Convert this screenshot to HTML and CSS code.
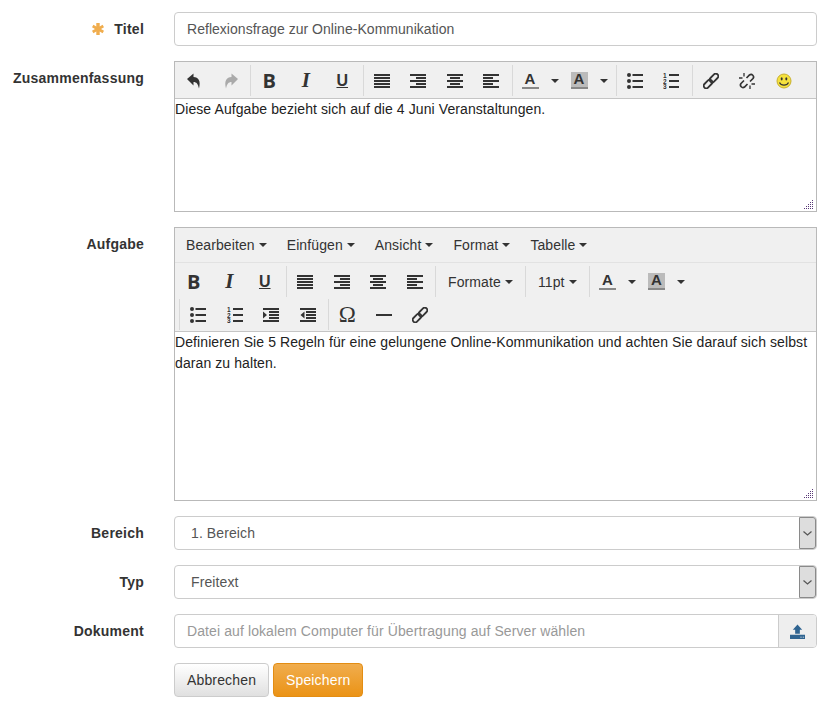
FILE: index.html
```html
<!DOCTYPE html>
<html lang="de">
<head>
    <meta charset="UTF-8">
    <title>Aufgabe bearbeiten</title>
    <link rel="stylesheet" href="styles.css">
</head>
<body>
    <svg class="defs" width="0" height="0">
        <symbol id="i-undo" viewBox="0 0 16 16"><path d="M1 6 7.5.5V4c5 0 7.500 4 5.500 11.500C12 11 10.500 9 7.500 9v3.500z"/></symbol>
        <symbol id="i-justify" viewBox="0 0 16 16"><path d="M0 1h16v2H0zM0 4h16v2H0zM0 7h16v2H0zM0 10h16v2H0zM0 13h16v2H0z"/></symbol>
        <symbol id="i-right" viewBox="0 0 16 16"><path d="M0 1h16v2H0zM6 4h10v2H6zM0 7h16v2H0zM6 10h10v2H6zM0 13h16v2H0z"/></symbol>
        <symbol id="i-center" viewBox="0 0 16 16"><path d="M0 1h16v2H0zM3 4h10v2H3zM0 7h16v2H0zM3 10h10v2H3zM0 13h16v2H0z"/></symbol>
        <symbol id="i-left" viewBox="0 0 16 16"><path d="M0 1h16v2H0zM0 4h10v2H0zM0 7h16v2H0zM0 10h10v2H0zM0 13h16v2H0z"/></symbol>
        <symbol id="i-bullist" viewBox="0 0 16 16"><circle cx="2" cy="2" r="2"/><circle cx="2" cy="8" r="2"/><circle cx="2" cy="14" r="2"/><path d="M5.500 1h10.500v2H5.500zM5.500 7h10.500v2H5.500zM5.500 13h10.500v2H5.500z"/></symbol>
        <symbol id="i-indent" viewBox="0 0 16 16"><path d="M0 1h16v2H0zM6 4h10v2H6zM6 7h10v2H6zM6 10h10v2H6zM0 13h16v2H0zM0 4.500 4 8l-4 3.500z"/></symbol>
        <symbol id="i-outdent" viewBox="0 0 16 16"><path d="M0 1h16v2H0zM6 4h10v2H6zM6 7h10v2H6zM6 10h10v2H6zM0 13h16v2H0zM4.500 4.500.5 8l4 3.500z"/></symbol>
        <symbol id="i-link" viewBox="0 0 16 16"><g fill="none" stroke="currentColor" stroke-width="1.800"><rect x="-5" y="-2.500" width="10" height="5" rx="2.500" transform="translate(5 11) rotate(-45)"/><rect x="-5" y="-2.500" width="10" height="5" rx="2.500" transform="translate(11 5) rotate(-45)"/></g></symbol>
        <symbol id="i-unlink" viewBox="0 0 16 16"><g fill="none" stroke="currentColor" stroke-width="1.700"><path d="M5 7.500 2 10.500a2.500 2.500 0 0 0 3.500 3.500L8.500 11"/><path d="M11 8.500l3-3A2.500 2.500 0 0 0 10.500 2L7.500 5"/><path d="M0 5h3.500M5 0v3.500M16 11h-3.500M11 16v-3.500" stroke-width="1.300"/></g></symbol>
        <symbol id="i-upload" viewBox="0 0 16 16"><path d="M8 .5 13 6h-2.500v4.500h-5V6H3z"/><path fill-rule="evenodd" d="M0 11.500h16V16H0zM11 13.500v1h1.500v-1zM13.500 13.500v1H15v-1z"/></symbol>
        <symbol id="grip" viewBox="0 0 10 10"><path fill="#5a3a78" d="M8 0h1v1H8zM8 2h1v1H8zM6 2h1v1H6zM8 4h1v1H8zM6 4h1v1H6zM4 4h1v1H4zM8 6h1v1H8zM6 6h1v1H6zM4 6h1v1H4zM2 6h1v1H2zM8 8h1v1H8zM6 8h1v1H6zM4 8h1v1H4zM2 8h1v1H2zM0 8h1v1H0z"/></symbol>
    </svg>

    <form class="form">
        <label class="label">
            <svg class="star" width="12" height="12" viewBox="0 0 12 12"><path d="M4.300 0h3.400v3.400l2.900-1.700 1.400 2.600L9 6l3 1.700-1.400 2.600-2.900-1.700V12H4.300V8.600l-2.900 1.700L0 7.700 3 6 0 4.300l1.400-2.600 2.900 1.700z"/></svg>
            Titel
        </label>
        <div class="input">Reflexionsfrage zur Online-Kommunikation</div>

        <label class="label">Zusammenfassung</label>
        <div class="editor">
            <div class="toolbar small">
                <div class="row">
                    <div class="group first">
                        <button type="button" class="btn"><svg class="ico"><use href="#i-undo"/></svg></button>
                        <button type="button" class="btn muted"><svg class="ico flip"><use href="#i-undo"/></svg></button>
                    </div>
                    <div class="group">
                        <button type="button" class="btn glyph bold">B</button>
                        <button type="button" class="btn glyph ital">I</button>
                        <button type="button" class="btn glyph under">U</button>
                    </div>
                    <div class="group">
                        <button type="button" class="btn"><svg class="ico"><use href="#i-justify"/></svg></button>
                        <button type="button" class="btn"><svg class="ico"><use href="#i-right"/></svg></button>
                        <button type="button" class="btn"><svg class="ico"><use href="#i-center"/></svg></button>
                        <button type="button" class="btn"><svg class="ico"><use href="#i-left"/></svg></button>
                    </div>
                    <div class="group colors">
                        <button type="button" class="split"><span class="color">A</span><span class="caret"></span></button>
                        <button type="button" class="split"><span class="color back">A</span><span class="caret"></span></button>
                    </div>
                    <div class="group">
                        <button type="button" class="btn"><svg class="ico"><use href="#i-bullist"/></svg></button>
                        <button type="button" class="btn">
                            <svg class="ico" viewBox="0 0 16 16"><text class="digit" x="0" y="5">1</text><text class="digit" x="0" y="10.500">2</text><text class="digit" x="0" y="16">3</text><path d="M6 1h10v2H6zM6 7h10v2H6zM6 13h10v2H6z"/></svg>
                        </button>
                    </div>
                    <div class="group">
                        <button type="button" class="btn"><svg class="ico"><use href="#i-link"/></svg></button>
                        <button type="button" class="btn"><svg class="ico"><use href="#i-unlink"/></svg></button>
                        <button type="button" class="btn">
                            <svg class="ico" viewBox="0 0 16 16"><circle cx="8" cy="8" r="7" fill="#f5e13c" stroke="#c8b030"/><ellipse cx="5.700" cy="5.800" rx="1" ry="1.600" fill="#333"/><ellipse cx="10.300" cy="5.800" rx="1" ry="1.600" fill="#333"/><path d="M3.500 9.500c1.500 3.500 7.500 3.500 9 0" fill="none" stroke="#333" stroke-width="1.200"/></svg>
                        </button>
                    </div>
                </div>
            </div>
            <div class="content short">
                Diese Aufgabe bezieht sich auf die 4 Juni Veranstaltungen.
                <svg class="grip" width="10" height="10" viewBox="0 0 10 10"><use href="#grip"/></svg>
            </div>
        </div>

        <label class="label">Aufgabe</label>
        <div class="editor">
            <div class="menubar">
                <span class="menu">Bearbeiten<span class="caret"></span></span>
                <span class="menu">Einfügen<span class="caret"></span></span>
                <span class="menu">Ansicht<span class="caret"></span></span>
                <span class="menu">Format<span class="caret"></span></span>
                <span class="menu">Tabelle<span class="caret"></span></span>
            </div>
            <div class="toolbar">
                <div class="row">
                    <div class="group first narrow">
                        <button type="button" class="btn glyph bold">B</button>
                        <button type="button" class="btn glyph ital">I</button>
                        <button type="button" class="btn glyph under">U</button>
                    </div>
                    <div class="group">
                        <button type="button" class="btn"><svg class="ico"><use href="#i-justify"/></svg></button>
                        <button type="button" class="btn"><svg class="ico"><use href="#i-right"/></svg></button>
                        <button type="button" class="btn"><svg class="ico"><use href="#i-center"/></svg></button>
                        <button type="button" class="btn"><svg class="ico"><use href="#i-left"/></svg></button>
                    </div>
                    <div class="group">
                        <button type="button" class="drop formate">Formate<span class="caret"></span></button>
                    </div>
                    <div class="group">
                        <button type="button" class="drop size">11pt<span class="caret"></span></button>
                    </div>
                    <div class="group colors">
                        <button type="button" class="split"><span class="color">A</span><span class="caret"></span></button>
                        <button type="button" class="split"><span class="color back">A</span><span class="caret"></span></button>
                    </div>
                </div>
                <div class="row second">
                    <div class="group">
                        <button type="button" class="btn"><svg class="ico"><use href="#i-bullist"/></svg></button>
                        <button type="button" class="btn">
                            <svg class="ico" viewBox="0 0 16 16"><text class="digit" x="0" y="5">1</text><text class="digit" x="0" y="10.500">2</text><text class="digit" x="0" y="16">3</text><path d="M6 1h10v2H6zM6 7h10v2H6zM6 13h10v2H6z"/></svg>
                        </button>
                        <button type="button" class="btn"><svg class="ico"><use href="#i-indent"/></svg></button>
                        <button type="button" class="btn"><svg class="ico"><use href="#i-outdent"/></svg></button>
                    </div>
                    <div class="group">
                        <button type="button" class="btn glyph omega">Ω</button>
                        <button type="button" class="btn"><svg class="ico" viewBox="0 0 16 16"><path d="M0 7h16v2H0z"/></svg></button>
                        <button type="button" class="btn"><svg class="ico"><use href="#i-link"/></svg></button>
                    </div>
                </div>
            </div>
            <div class="content tall">
                Definieren Sie 5 Regeln für eine gelungene Online-Kommunikation und achten Sie darauf sich selbst daran zu halten.
                <svg class="grip" width="10" height="10" viewBox="0 0 10 10"><use href="#grip"/></svg>
            </div>
        </div>

        <label class="label">Bereich</label>
        <div class="select">
            <span class="select-text">1. Bereich</span>
            <span class="arrow"><svg width="9" height="5" viewBox="0 0 9 5"><path d="M.5.500l4 3.500 4-3.500" fill="none" stroke="#555" stroke-width="1.200"/></svg></span>
        </div>

        <label class="label">Typ</label>
        <div class="select">
            <span class="select-text">Freitext</span>
            <span class="arrow"><svg width="9" height="5" viewBox="0 0 9 5"><path d="M.5.500l4 3.500 4-3.500" fill="none" stroke="#555" stroke-width="1.200"/></svg></span>
        </div>

        <label class="label">Dokument</label>
        <div class="file">
            <span class="file-text">Datei auf lokalem Computer für Übertragung auf Server wählen</span>
            <span class="file-btn"><svg class="upload"><use href="#i-upload"/></svg></span>
        </div>

        <div class="actions">
            <button type="button" class="action cancel">Abbrechen</button>
            <button type="button" class="action save">Speichern</button>
        </div>
    </form>
</body>
</html>
```

FILE: styles.css
```css
* {
    box-sizing: border-box;
}
body {
    margin: 0;
    font-family: "Liberation Sans", Arial, sans-serif;
    font-size: 14px;
    color: #333;
    background-color: #fff;
}
.defs {
    position: absolute;
}
button {
    font-family: inherit;
    font-size: 14px;
    color: #333;
    background: none;
    border: none;
    padding: 0;
}
.form {
    display: grid;
    grid-template-columns: 144px 643px;
    column-gap: 30px;
    row-gap: 15px;
    padding-top: 12px;
    align-items: start;
}
.label {
    font-weight: bold;
    text-align: right;
    line-height: 20px;
    padding-top: 7px;
    letter-spacing: .23px;
}
.star {
    fill: #f0ad4e;
    margin-right: 6px;
    vertical-align: -1px;
}
.input, .select, .file {
    height: 34px;
    border: 1px solid #ccc;
    border-radius: 4px;
    line-height: 32px;
    color: #555;
    background-color: #fff;
}
.input {
    padding: 0 12px;
    letter-spacing: .03px;
}

.editor {
    border: 1px solid #b9b9b9;
}
.menubar {
    display: flex;
    height: 35px;
    padding-left: 11px;
    background-color: #f0f0f0;
    border-bottom: 1px solid #e2e2e2;
    line-height: 34px;
    gap: 20px;
    letter-spacing: .1px;
}
.menu {
    display: flex;
    align-items: center;
}
.toolbar {
    background-color: #f0f0f0;
    border-bottom: 1px solid #c5c5c5;
    padding: 3px 0 0 1px;
}
.toolbar.small {
    height: 37px;
}
.small .first {
    padding-right: 1px;
}
.row {
    display: flex;
    height: 32px;
}
.row.second {
    margin: 1px 0 0 3px;
}
.group {
    display: flex;
    align-items: center;
    height: 31px;
    padding-right: 2px;
    border-left: 1px solid #d9d9d9;
}
.group.first {
    border-left: none;
}
.group.colors {
    padding-right: 5px;
}
.group.narrow {
    padding-right: 3.5px;
}
.btn {
    display: flex;
    align-items: center;
    justify-content: center;
    width: 36.5px;
    height: 30px;
    color: #333;
}
.narrow .btn {
    width: 35.5px;
}
.btn.muted {
    color: #aaa;
}
.ico {
    width: 16px;
    height: 16px;
    fill: currentColor;
}
.flip {
    transform: scaleX(-1);
}
.digit {
    font-size: 6.5px;
    font-weight: bold;
}
.glyph {
    font-size: 20px;
    line-height: 1;
}
.bold {
    font-weight: bold;
    font-family: "Open Sans", sans-serif;
}
.ital {
    font-weight: bold;
    font-style: italic;
    font-family: "Liberation Serif", serif;
    font-size: 21px;
}
.under {
    font-size: 16px;
    font-weight: bold;
    text-decoration: underline;
    text-underline-offset: 1px;
}
.omega {
    font-family: "Liberation Serif", serif;
    font-size: 23px;
}
.split {
    display: flex;
    align-items: center;
    width: 49px;
    height: 30px;
    padding-left: 9px;
}
.color {
    display: block;
    width: 17px;
    height: 17px;
    line-height: 14px;
    font-size: 15px;
    font-weight: bold;
    text-align: center;
    border-bottom: 2px solid #888;
}
.color.back {
    background-color: #bbb;
}
.caret {
    display: inline-block;
    width: 0;
    height: 0;
    margin-left: 4px;
    border-top: 4px solid #333;
    border-left: 4px solid transparent;
    border-right: 4px solid transparent;
}
.split .caret {
    margin-left: 12px;
}
.drop {
    display: flex;
    align-items: center;
    height: 30px;
    letter-spacing: .1px;
}
.formate {
    width: 87px;
    padding-left: 12px;
}
.size {
    width: 61px;
    padding-left: 12px;
}
.content {
    position: relative;
    padding: 0;
    line-height: 21px;
    letter-spacing: .09px;
    color: #222;
    background-color: #fff;
}
.content.short {
    height: 112px;
}
.content.tall {
    height: 168px;
}
.grip {
    position: absolute;
    right: 2px;
    bottom: 1px;
}

.select {
    display: flex;
    justify-content: space-between;
}
.select-text {
    padding-left: 16px;
    letter-spacing: .1px;
}
.arrow {
    display: flex;
    align-items: center;
    justify-content: center;
    width: 17px;
    background-color: #ddd;
    border: 1px solid #8a8a8a;
    border-radius: 0 3px 3px 0;
}
.file {
    display: flex;
    justify-content: space-between;
}
.file-text {
    padding-left: 12px;
    color: #999;
    letter-spacing: .1px;
}
.file-btn {
    display: flex;
    align-items: center;
    justify-content: center;
    width: 38px;
    background-color: #eee;
    border-left: 1px solid #ccc;
    border-radius: 0 3px 3px 0;
}
.upload {
    width: 15px;
    height: 15px;
    fill: #2f6491;
}
.actions {
    grid-column: 2;
    display: flex;
    gap: 4px;
}
.action {
    height: 34px;
    border-radius: 4px;
    padding: 0 12px;
    letter-spacing: .15px;
}
.cancel {
    width: 95px;
    color: #333;
    background-image: linear-gradient(#fff, #e0e0e0);
    border: 1px solid #ccc;
}
.save {
    width: 90px;
    color: #fff;
    background-image: linear-gradient(#f0ad4e, #eb9316);
    border: 1px solid #e38d13;
}
```
